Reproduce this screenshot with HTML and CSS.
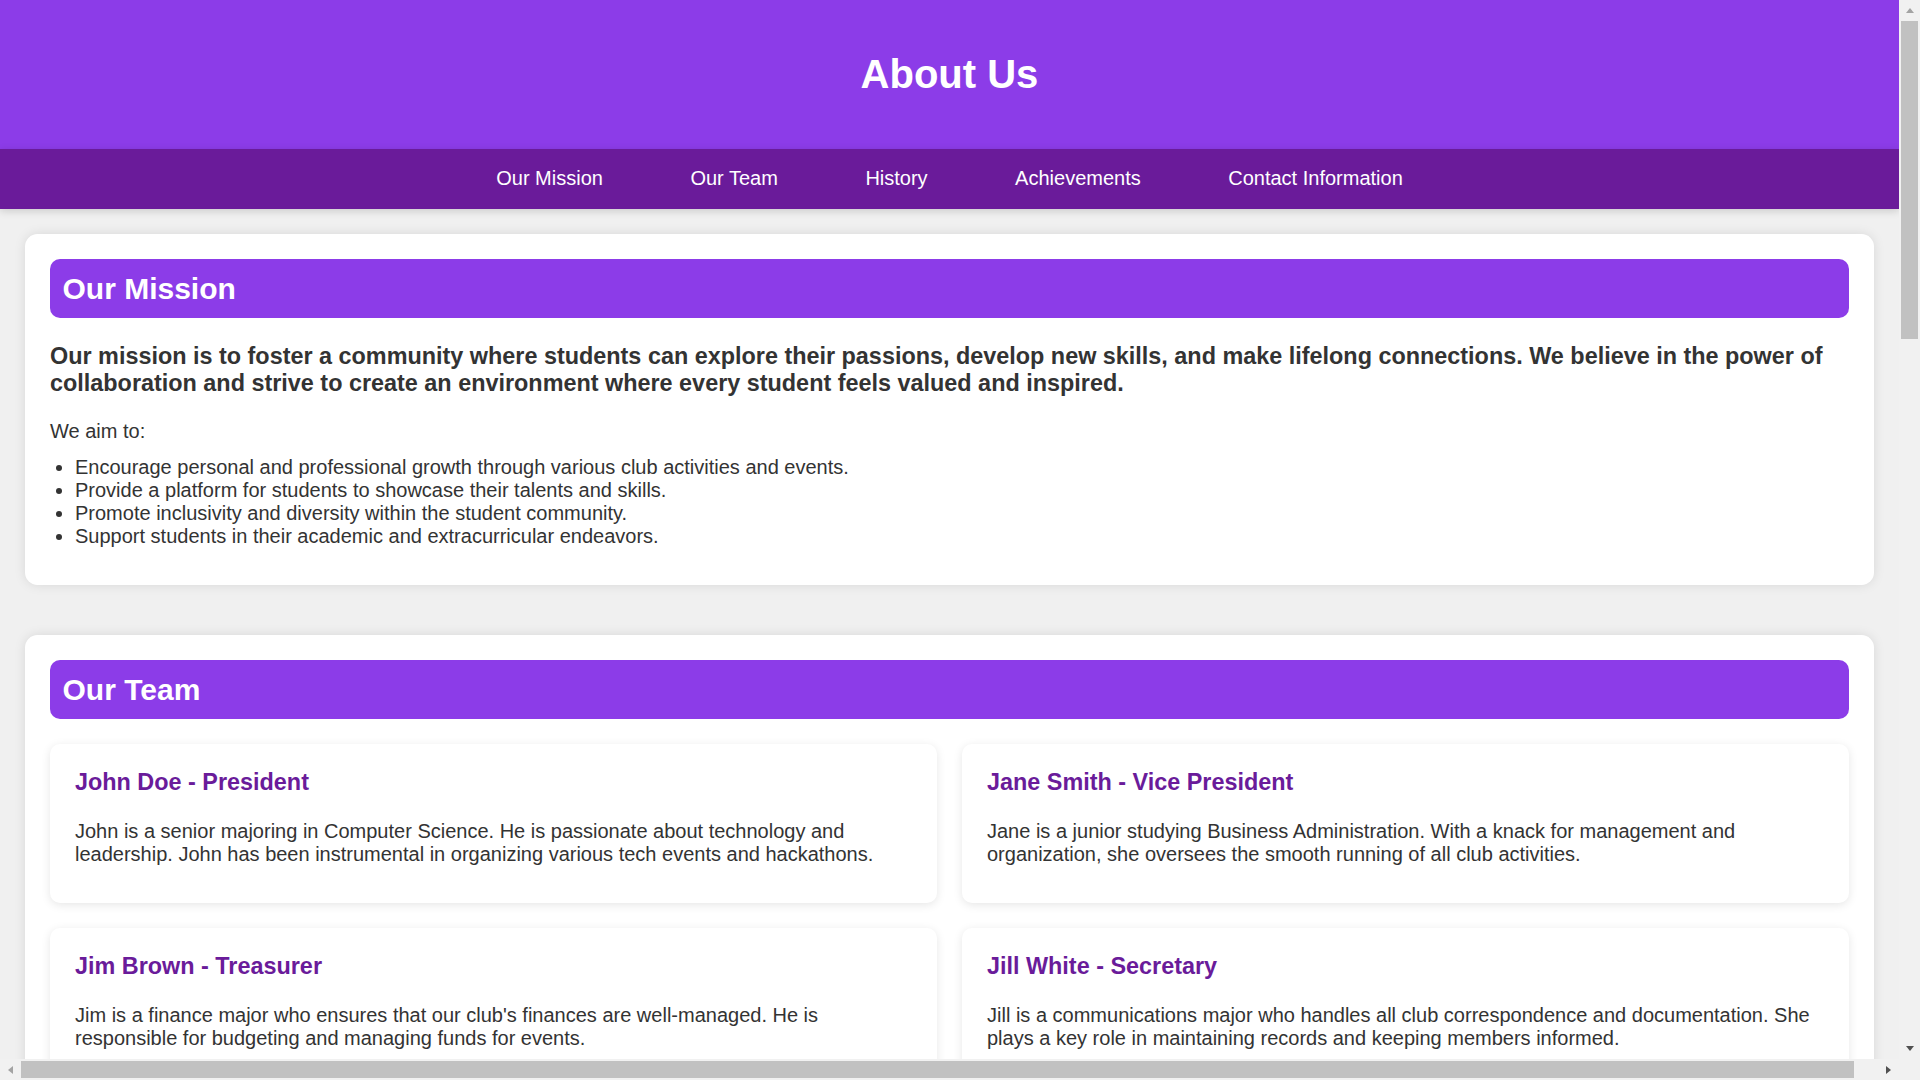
FILE: index.html
```html
<!DOCTYPE html>
<html lang="en">
<head>
<meta charset="utf-8">
<title>About Us</title>
<link rel="stylesheet" href="styles.css">
</head>
<body>
<div class="screen">
  <div class="page">
    <header class="site-header">
      <h1 class="site-title">About Us</h1>
    </header>
    <nav class="site-nav">
      <ul class="nav-list">
        <li><a href="#mission">Our Mission</a></li>
        <li><a href="#team">Our Team</a></li>
        <li><a href="#history">History</a></li>
        <li><a href="#achievements">Achievements</a></li>
        <li><a href="#contact">Contact Information</a></li>
      </ul>
    </nav>
    <main class="content">
      <section class="panel" id="mission">
        <h2 class="panel-title">Our Mission</h2>
        <p class="lead">Our mission is to foster a community where students can explore their passions, develop new skills, and make lifelong connections. We believe in the power of collaboration and strive to create an environment where every student feels valued and inspired.</p>
        <p>We aim to:</p>
        <ul class="bullets">
          <li>Encourage personal and professional growth through various club activities and events.</li>
          <li>Provide a platform for students to showcase their talents and skills.</li>
          <li>Promote inclusivity and diversity within the student community.</li>
          <li>Support students in their academic and extracurricular endeavors.</li>
        </ul>
      </section>

      <section class="panel" id="team">
        <h2 class="panel-title">Our Team</h2>
        <div class="card-grid">
          <article class="card">
            <h3 class="card-title">John Doe - President</h3>
            <p>John is a senior majoring in Computer Science. He is passionate about technology and leadership. John has been instrumental in organizing various tech events and hackathons.</p>
          </article>
          <article class="card">
            <h3 class="card-title">Jane Smith - Vice President</h3>
            <p>Jane is a junior studying Business Administration. With a knack for management and organization, she oversees the smooth running of all club activities.</p>
          </article>
          <article class="card">
            <h3 class="card-title">Jim Brown - Treasurer</h3>
            <p>Jim is a finance major who ensures that our club's finances are well-managed. He is responsible for budgeting and managing funds for events.</p>
          </article>
          <article class="card">
            <h3 class="card-title">Jill White - Secretary</h3>
            <p>Jill is a communications major who handles all club correspondence and documentation. She plays a key role in maintaining records and keeping members informed.</p>
          </article>
        </div>
      </section>

      <section class="panel" id="history">
        <h2 class="panel-title">History</h2>
        <p>Our club was founded in 2010 by a small group of students who wanted to create a space where everyone could learn, share ideas and grow together.</p>
      </section>

      <section class="panel" id="achievements">
        <h2 class="panel-title">Achievements</h2>
        <p>Over the years, our members have worked hard to earn recognition both on campus and beyond.</p>
      </section>

      <section class="panel" id="contact">
        <h2 class="panel-title">Contact Information</h2>
        <p>Email: studentclub@university.edu</p>
      </section>
    </main>
  </div>

  <div class="vscroll">
    <div class="sb-btn"><span class="arrow arrow-up"></span></div>
    <div class="vtrack"><div class="vthumb"></div></div>
    <div class="sb-btn"><span class="arrow arrow-down"></span></div>
  </div>

  <div class="hscroll">
    <div class="sb-btn"><span class="arrow arrow-left"></span></div>
    <div class="htrack"><div class="hthumb"></div></div>
    <div class="sb-btn"><span class="arrow arrow-right"></span></div>
  </div>

  <div class="sb-corner"></div>
</div>
</body>
</html>
```

FILE: styles.css
```css
html,
body {
  margin: 0;
  height: 100%;
  overflow: hidden;
}

body {
  font-family: "Liberation Sans", Arial, Helvetica, sans-serif;
  font-size: 20px;
  color: #333;
  background: #f0f0f0;
}

/* window frame: page area + scrollbars */
.screen {
  display: grid;
  grid-template-columns: 1fr 21px;
  grid-template-rows: 1fr 21px;
  width: 100vw;
  height: 100vh;
}

.page {
  min-width: 0;
  min-height: 0;
  overflow: hidden;
  background: #f0f0f0;
}

.vscroll {
  display: flex;
  flex-direction: column;
  background: #f1f1f1;
}

.hscroll {
  display: flex;
  background: #f1f1f1;
}

.sb-corner {
  background: #f1f1f1;
}

.sb-btn {
  flex: none;
  width: 21px;
  height: 21px;
  display: flex;
  align-items: center;
  justify-content: center;
}

.vtrack {
  flex: 1;
}

.vthumb {
  height: 318px;
  margin: 0 2px;
  background: #c1c1c1;
}

.htrack {
  flex: 1;
  display: flex;
  align-items: center;
}

.hthumb {
  width: 1833px;
  height: 17px;
  background: #c1c1c1;
}

.arrow {
  display: block;
  width: 0;
  height: 0;
}

.arrow-up {
  border-left: 4.5px solid transparent;
  border-right: 4.5px solid transparent;
  border-bottom: 5px solid #a3a3a3;
}

.arrow-down {
  border-left: 4.5px solid transparent;
  border-right: 4.5px solid transparent;
  border-top: 5px solid #505050;
}

.arrow-left {
  border-top: 4.5px solid transparent;
  border-bottom: 4.5px solid transparent;
  border-right: 5px solid #a3a3a3;
}

.arrow-right {
  border-top: 4.5px solid transparent;
  border-bottom: 4.5px solid transparent;
  border-left: 5px solid #505050;
}

/* page content */
.site-header {
  background: #8c3ce8;
  color: #fff;
  text-align: center;
  padding: 51px 0 52px;
}

.site-title {
  margin: 0;
  font-size: 40px;
  line-height: 46px;
  font-weight: bold;
}

.site-nav {
  background: #6a1b9a;
  box-shadow: 0 2px 8px rgba(0, 0, 0, 0.16);
}

.nav-list {
  display: flex;
  justify-content: center;
  gap: 87.5px;
  list-style: none;
  margin: 0;
  padding: 17.5px 0 19.5px;
  line-height: 23px;
}

.nav-list a {
  color: #fff;
  text-decoration: none;
}

.content {
  padding: 25px;
}

.panel {
  background: #fff;
  border-radius: 12.5px;
  padding: 25px;
  margin-bottom: 50px;
  box-shadow: 0 0 12px rgba(0, 0, 0, 0.1);
}

.panel-title {
  margin: 0 0 25px;
  padding: 12.5px;
  background: #8c3ce8;
  color: #fff;
  font-size: 30px;
  border-radius: 10px;
}

p {
  margin: 12.5px 0;
}

.lead {
  font-size: 23.4px;
  font-weight: bold;
  margin: 23.4px 0;
}

.bullets {
  margin: 12.5px 0;
  padding-left: 25px;
}

.card-grid {
  display: grid;
  grid-template-columns: 1fr 1fr;
  gap: 25px;
}

.card {
  background: #fff;
  border-radius: 10px;
  padding: 25px;
  box-shadow: 0 2px 10px rgba(0, 0, 0, 0.1);
}

.card-title {
  margin: 0 0 23.4px;
  font-size: 23.4px;
  color: #6a1b9a;
}
```
